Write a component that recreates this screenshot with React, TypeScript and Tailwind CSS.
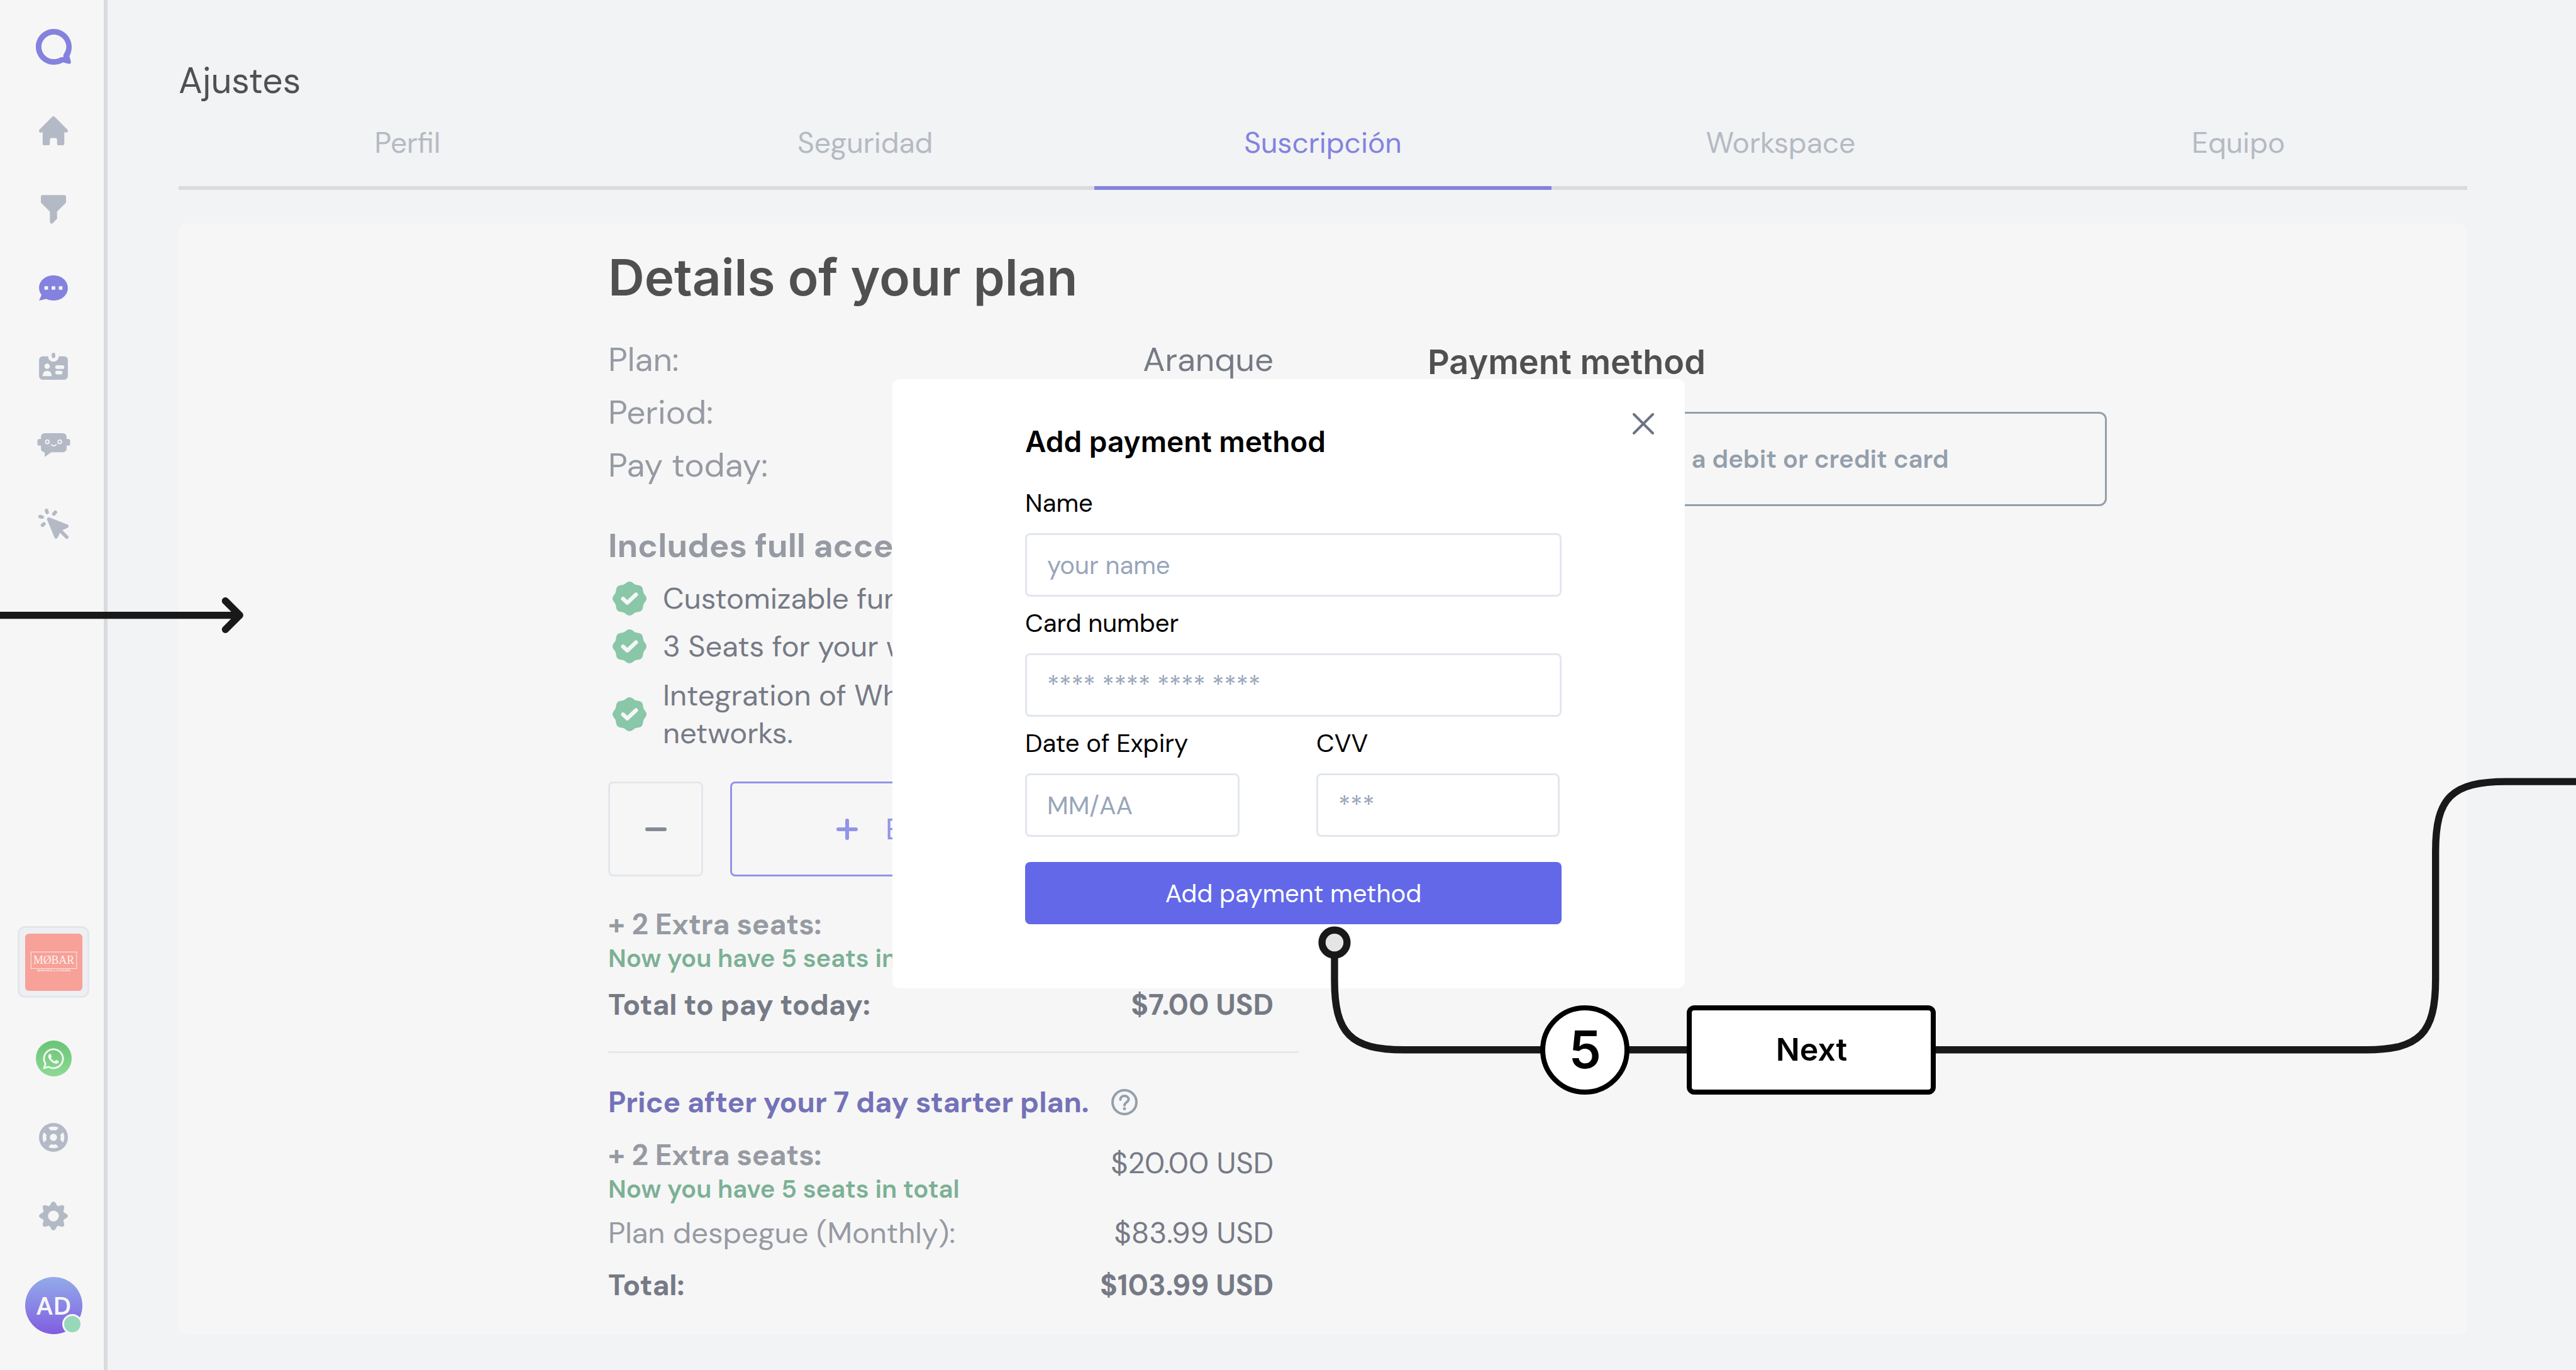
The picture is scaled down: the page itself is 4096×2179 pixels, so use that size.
import React from "react";
import { FaWhatsapp } from "react-icons/fa";
import { CreditCard } from "lucide-react";

const SANS = "font-['DM_Sans','Inter',sans-serif]";

function LogoIcon() {
  return (
    <svg viewBox="0 0 80 80" className="h-[57px] w-[57px] text-[#8482de]" aria-hidden="true">
      <path
        fill="currentColor"
        fillRule="evenodd"
        d="M40 0C62 0 80 18 80 40c0 8-2 15-5 21l3 11c1.200 4-1 7-5 6l-12.500-3.200C54.500 78.500 47 80 40 80 18 80 0 62 0 40S18 0 40 0Zm0 12.500C25 12.500 12.500 25 12.500 40S25 67.500 40 67.500c6.500 0 10.500-1.500 15-4 2-1 4.500-1 6.800-.5-.8-2.500-.6-5 .6-7C65.500 51 68 46.500 68 40 68 25 55 12.500 40 12.500Z"
      />
    </svg>
  );
}

function HomeIcon() {
  return (
    <svg viewBox="0 0 64 64" className="h-[46px] w-[46px]" fill="currentColor" aria-hidden="true">
      <path d="M29.300 1.100 1.300 29.200a4 4 0 0 0 5.400 5.900L8 34v26a4 4 0 0 0 4 4h8a4 4 0 0 0 4-4v-8a4 4 0 0 1 4-4h8a4 4 0 0 1 4 4v8a4 4 0 0 0 4 4h8a4 4 0 0 0 4-4V34l1.300 1.100a4 4 0 0 0 5.400-5.900L34.700 1.100a4 4 0 0 0-5.400 0Z" />
    </svg>
  );
}

function FunnelIcon() {
  return (
    <svg viewBox="0 0 56 64" className="h-[46px] w-10" fill="currentColor" aria-hidden="true">
      <path d="M4 0h48a4 4 0 0 1 4 4v13L36 37v16l-9.200 9.500A4 4 0 0 1 20 60V37L0 17V4a4 4 0 0 1 4-4Z" />
    </svg>
  );
}

function ChatIcon() {
  return (
    <svg viewBox="0 0 64 56" className="h-10 w-[46px] text-[#8482de]" fill="currentColor" aria-hidden="true">
      <path
        fillRule="evenodd"
        d="M32 0c18 0 32 12 32 28S50 56 32 56c-6 0-11.500-1.200-16-3.500L0 56l5.500-12.500C2 39 0 34 0 28 0 12 14 0 32 0ZM12 24v8h8v-8Zm16 0v8h8v-8Zm16 0v8h8v-8Z"
      />
    </svg>
  );
}

function ContactsIcon() {
  return (
    <svg viewBox="0 0 64 60" className="h-[43px] w-[46px]" fill="currentColor" aria-hidden="true">
      <rect x="28" y="0" width="8" height="12" rx="4" />
      <path
        fillRule="evenodd"
        d="M8 8h12a12 12 0 0 0 24 0h12a8 8 0 0 1 8 8v36a8 8 0 0 1-8 8H8a8 8 0 0 1-8-8V16a8 8 0 0 1 8-8Zm10 16a6 6 0 1 0 0 12 6 6 0 0 0 0-12ZM8 52h20v-2a10 10 0 0 0-20 0Zm32-24a4 4 0 0 0 0 8h12a4 4 0 0 0 0-8Zm0 12a4 4 0 0 0 0 8h8a4 4 0 0 0 0-8Z"
      />
    </svg>
  );
}

function BotIcon() {
  return (
    <svg viewBox="0 0 74 54" className="h-[38px] w-[53px]" fill="currentColor" aria-hidden="true">
      <rect x="0" y="13" width="16" height="15" rx="4" />
      <rect x="58" y="13" width="16" height="15" rx="4" />
      <path d="M16 0h42a8 8 0 0 1 8 8v27a8 8 0 0 1-8 8H31.500L16.500 53.500V43H16a8 8 0 0 1-8-8V8a8 8 0 0 1 8-8Z" />
      <g fill="none" stroke="#f6f6f6" strokeWidth="2.600" strokeLinecap="round">
        <circle cx="22.500" cy="19.500" r="4" />
        <circle cx="50.500" cy="19.500" r="4" />
        <path d="M31.500 26.200c3.500 3.200 7.500 3.200 11 0" />
      </g>
    </svg>
  );
}

function CursorIcon() {
  return (
    <svg
      viewBox="0 0 68 68"
      className="h-12 w-12"
      fill="none"
      stroke="currentColor"
      strokeWidth="8"
      strokeLinecap="round"
      strokeLinejoin="round"
      aria-hidden="true"
    >
      <path d="M18.300 4l1.400 4.500M38.400 8.200l-3.600 3.800M4 17.800l4.600 1.200M12.500 34.400l-3.200 3M50.500 50.500 64 64" />
      <path d="M23.500 23.500 64 39.500 47.500 47.500 40 63.500Z" fill="currentColor" />
    </svg>
  );
}

function LifebuoyIcon() {
  return (
    <svg viewBox="0 0 64 64" className="h-[46px] w-[46px]" fill="none" stroke="currentColor" aria-hidden="true">
      <circle cx="32" cy="32" r="28" strokeWidth="8" />
      <circle cx="32" cy="32" r="12" strokeWidth="8" />
      <path strokeWidth="14" d="m23 23-8-8m26 8 8-8m-26 26-8 8m26-8 8 8" />
    </svg>
  );
}

function wavyCircle(cx: number, cy: number, radius: number, wave: number, bumps: number) {
  const points: string[] = [];
  for (let deg = 0; deg < 360; deg += 3) {
    const a = (deg * Math.PI) / 180;
    const r = radius + wave * Math.cos(bumps * a);
    points.push(`${(cx + r * Math.cos(a)).toFixed(2)} ${(cy + r * Math.sin(a)).toFixed(2)}`);
  }
  return `M${points.join("L")}Z`;
}

function GearIcon() {
  return (
    <svg viewBox="0 0 64 64" className="h-[46px] w-[46px]" fill="currentColor" aria-hidden="true">
      <path fillRule="evenodd" d={`${wavyCircle(32, 32, 28, 4, 8)}M44 32a12 12 0 1 0-24 0 12 12 0 0 0 24 0Z`} />
    </svg>
  );
}

function BadgeIcon() {
  return (
    <svg viewBox="0 0 76 76" className="h-[54px] w-[54px] shrink-0" aria-hidden="true">
      <path fill="#89c7a8" d={wavyCircle(38, 38, 36, 2, 8)} />
      <path
        d="M23.500 38.500 33 47.500 52.500 29"
        fill="none"
        stroke="#f6f6f6"
        strokeWidth="9"
        strokeLinecap="round"
        strokeLinejoin="round"
      />
    </svg>
  );
}

function BrandMark() {
  return (
    <svg viewBox="0 0 128 128" className="h-[91px] w-[91px] rounded-md bg-[#f7a198]" role="img" aria-label="Møbar">
      <rect x="13" y="41" width="102" height="37" fill="none" stroke="#fbe9e6" strokeWidth="1.500" />
      <text x="64" y="68" textAnchor="middle" fill="#fdf3f1" fontSize="25" fontFamily="'Liberation Serif', serif">
        MØBAR
      </text>
      <text x="64" y="84" textAnchor="middle" fill="#fbe9e6" fontSize="5" fontWeight="700" fontFamily="'Liberation Sans', sans-serif">
        BARRA MÓVIL &amp; COCTELERÍA
      </text>
    </svg>
  );
}

const NAV = [
  { label: "Inicio", icon: <HomeIcon /> },
  { label: "Embudos", icon: <FunnelIcon /> },
  { label: "Chats", icon: <ChatIcon /> },
  { label: "Contactos", icon: <ContactsIcon /> },
  { label: "Bots", icon: <BotIcon /> },
  { label: "Acciones", icon: <CursorIcon /> },
];

const TOOLS = [
  {
    label: "WhatsApp",
    icon: (
      <span className="flex h-[57px] w-[57px] items-center justify-center rounded-full bg-linear-to-b from-[#6ac476] to-[#8dda94]">
        <FaWhatsapp className="h-[38px] w-[38px] text-[#f6f6f6]" />
      </span>
    ),
  },
  { label: "Ayuda", icon: <LifebuoyIcon /> },
  { label: "Configuración", icon: <GearIcon /> },
];

function NavItem({ label, icon }: { label: string; icon: React.ReactNode }) {
  return (
    <a href="#" aria-label={label} className="flex h-[125px] items-center justify-center text-[#b3bac6]">
      {icon}
    </a>
  );
}

function Sidebar() {
  return (
    <nav className="flex w-[171px] shrink-0 flex-col items-center border-r-[6px] border-[#dadbdf] bg-[#f6f6f6] pt-3 pb-[57px] pl-[5px]">
      <a href="#" aria-label="Logo" className="mb-2 flex h-[125px] items-center">
        <LogoIcon />
      </a>
      {NAV.map((item) => (
        <NavItem key={item.label} {...item} />
      ))}
      <div className="mt-auto flex flex-col items-center">
        <div className="mb-[34px] flex h-[114px] w-[114px] items-center justify-center rounded-xl border-[3px] border-[#e3e7eb] bg-[#edeff3]">
          <BrandMark />
        </div>
        {TOOLS.map((item) => (
          <NavItem key={item.label} {...item} />
        ))}
        <div className="relative mt-[35px] flex h-[91px] w-[91px] items-center justify-center rounded-full bg-linear-to-b from-[#93abe9] to-[#805ce0] text-[40px] font-semibold text-[#f6f6f6]">
          AD
          <span className="absolute right-0 bottom-0 h-8 w-8 rounded-full border-[3px] border-[#f6f6f6] bg-[#97d8b8]" />
        </div>
      </div>
    </nav>
  );
}

const TABS = ["Perfil", "Seguridad", "Suscripción", "Workspace", "Equipo"];

function Tabs() {
  return (
    <div role="tablist" className="mt-[38px] grid grid-cols-5 text-[46px] leading-[60px]">
      {TABS.map((tab) =>
        tab === "Suscripción" ? (
          <button key={tab} role="tab" aria-selected="true" className="border-b-[6px] border-[#8482de] pb-[39px] text-[#8482de]">
            {tab}
          </button>
        ) : (
          <button key={tab} role="tab" aria-selected="false" className="border-b-[6px] border-[#dadbdf] pb-[39px] text-[#b5bac2]">
            {tab}
          </button>
        ),
      )}
    </div>
  );
}

function PlanDetails() {
  return (
    <section className="col-start-2 text-[47px] leading-[60px] text-[#969aa3]">
      <h2 className="font-['Inter',sans-serif] text-[80px] leading-24 font-semibold text-[#505050]">Details of your plan</h2>
      <div className="mt-[41px] text-[53px] leading-[84px]">
        <div className="flex justify-between pr-10">
          <span>Plan:</span>
          <span className="text-[#767a86]">Aranque</span>
        </div>
        <div>Period:</div>
        <div>Pay today:</div>
      </div>
      <h3 className="mt-11 text-[53px] leading-[84px] font-bold">Includes full access to:</h3>
      <ul className="mt-3 flex flex-col text-[#767a86]">
        <li className="flex items-center gap-[26px] pl-[7px]">
          <BadgeIcon />
          <span>Customizable funnels</span>
        </li>
        <li className="mt-4 flex items-center gap-[26px] pl-[7px]">
          <BadgeIcon />
          <span>3 Seats for your workspace</span>
        </li>
        <li className="mt-[18px] flex items-center gap-[26px] pl-[7px]">
          <BadgeIcon />
          <span>
            Integration of WhatsApp and social
            <br />
            networks.
          </span>
        </li>
      </ul>
      <div className="mt-[47px] flex gap-[43px] pr-10">
        <button
          aria-label="Remove seat"
          className="flex h-[151px] w-[151px] shrink-0 items-center justify-center rounded-lg border-[3px] border-[#e3e7eb] text-[#868a96]"
        >
          <span className="h-[6px] w-[34px] rounded-full bg-current" />
        </button>
        <button className="flex h-[151px] flex-1 items-center gap-11 rounded-lg border-[3px] border-[#9294e9] pl-[166px] text-[#9294e9]">
          <svg viewBox="0 0 34 34" className="h-[34px] w-[34px]" aria-hidden="true">
            <path d="M17 3v28M3 17h28" fill="none" stroke="currentColor" strokeWidth="6" strokeLinecap="round" />
          </svg>
          <span>Extra seats</span>
        </button>
      </div>
      <div className="mt-[46px] text-[46px] font-bold">+ 2 Extra seats:</div>
      <div className="text-[40px] leading-12 font-semibold text-[#7cb095]">Now you have 5 seats in total</div>
      <div className="mt-5 flex justify-between pr-10 text-[46px] font-bold text-[#767a86]">
        <span>Total to pay today:</span>
        <span>$7.00 USD</span>
      </div>
      <hr className="mt-11 border-t-[3px] border-[#e4e8ec]" />
      <div className="mt-12 flex items-center gap-9">
        <h3 className="text-[46px] font-bold text-[#7472b8]">Price after your 7 day starter plan.</h3>
        <button aria-label="Help" className="text-[#949fac]">
          <svg viewBox="0 0 42 42" className="h-[42px] w-[42px]" fill="none" stroke="currentColor" strokeLinecap="round" aria-hidden="true">
            <circle cx="21" cy="21" r="19" strokeWidth="4" />
            <path d="M14.500 17c0-4 3-6 6.500-6s6.500 2.200 6.500 5.700c0 4.300-6.500 4.800-6.500 9.300" strokeWidth="4" />
            <circle cx="21" cy="31.500" r="2.400" fill="currentColor" stroke="none" />
          </svg>
        </button>
      </div>
      <div className="mt-6 flex items-start justify-between pr-10">
        <div>
          <div className="text-[46px] font-bold">+ 2 Extra seats:</div>
          <div className="text-[40px] leading-12 font-semibold text-[#7cb095]">Now you have 5 seats in total</div>
        </div>
        <span className="pt-[13px] text-[#767a86]">$20.00 USD</span>
      </div>
      <div className="mt-4 flex justify-between pr-10">
        <span>Plan despegue (Monthly):</span>
        <span className="text-[#767a86]">$83.99 USD</span>
      </div>
      <div className="mt-[23px] flex justify-between pr-10 text-[46px] font-bold text-[#767a86]">
        <span>Total:</span>
        <span>$103.99 USD</span>
      </div>
    </section>
  );
}

function PaymentMethod() {
  return (
    <section className="col-start-4 pt-[151px]">
      <h2 className="-ml-1 font-['Inter',sans-serif] text-[54px] leading-16 font-semibold text-[#505050]">Payment method</h2>
      <button className="mt-[47px] flex h-[150px] w-full items-center justify-center gap-7 rounded-xl border-[3px] border-[#949fac] text-[40px] font-semibold text-[#949fac]">
        <CreditCard size={48} />
        <span>Add a debit or credit card</span>
      </button>
    </section>
  );
}

function Field({ id, label, placeholder }: { id: string; label: string; placeholder: string }) {
  return (
    <div className="flex flex-col gap-[18px] text-[40px]">
      <label htmlFor={id} className="leading-[60px] text-black">
        {label}
      </label>
      <input
        id={id}
        placeholder={placeholder}
        className="h-[101px] w-full rounded-lg border-[3px] border-[#e2e7ee] bg-white px-8 placeholder:text-[#98a5b9]"
      />
    </div>
  );
}

function PaymentDialog() {
  return (
    <div className="absolute inset-0 flex items-center justify-center pb-1 pl-[2px]">
      <div role="dialog" aria-labelledby="dialog-title" className="relative w-[1260px] rounded-xl bg-white pt-[69px] pr-[196px] pb-[102px] pl-[211px]">
        <button aria-label="Close" className="absolute top-[54px] right-[49px] text-[#6b7283]">
          <svg viewBox="0 0 34 34" className="h-[34px] w-[34px]" aria-hidden="true">
            <path d="m2 2 30 30M32 2 2 32" stroke="currentColor" strokeWidth="4" strokeLinecap="round" />
          </svg>
        </button>
        <h2 id="dialog-title" className="font-['Inter',sans-serif] text-[46px] leading-[60px] font-semibold text-black">
          Add payment method
        </h2>
        <form className="mt-[38px] flex flex-col gap-3">
          <Field id="name" label="Name" placeholder="your name" />
          <Field id="card" label="Card number" placeholder="**** **** **** ****" />
          <div className="grid grid-cols-[341fr_122fr_387fr_3fr]">
            <Field id="expiry" label="Date of Expiry" placeholder="MM/AA" />
            <div className="col-start-3">
              <Field id="cvv" label="CVV" placeholder="***" />
            </div>
          </div>
          <button type="button" className="mt-7 h-[99px] rounded-lg bg-[#6268e8] text-[40px] text-white">
            Add payment method
          </button>
        </form>
      </div>
    </div>
  );
}

function FlowOverlay() {
  return (
    <div className="pointer-events-none absolute inset-0">
      <svg viewBox="0 0 5760 3064" className="h-full w-full" fill="none" stroke="#191919" strokeWidth="16" aria-hidden="true">
        <path d="M0 1376H536M504 1344l32 32-32 32" strokeLinecap="round" strokeLinejoin="round" />
        <path d="M2984 2108V2192C2984 2312 3020 2348 3140 2348H5290C5410 2348 5446 2312 5446 2190V1904C5446 1784 5482 1748 5604 1748H5760" />
        <circle cx="2984" cy="2108" r="28" fill="#e5e5e5" />
      </svg>
      <div className="absolute top-[73.36%] left-[59.8%] flex items-center gap-[91px] font-['Inter',sans-serif] font-semibold text-black">
        <div className="flex h-[142px] w-[142px] items-center justify-center rounded-full border-[8px] border-black bg-white text-[82px]">5</div>
        <div className="flex h-[142px] w-[396px] items-center justify-center rounded-xl border-[8px] border-black bg-white text-[50px]">Next</div>
      </div>
    </div>
  );
}

export default function App() {
  return (
    <div className={`relative flex min-h-screen overflow-hidden bg-[#f1f3f5] ${SANS}`}>
      <Sidebar />
      <main className="flex min-w-0 flex-1 flex-col pt-[99px] pr-[173px] pb-[57px] pl-[113px]">
        <h1 className="text-[57px] leading-[60px] text-[#505050]">Ajustes</h1>
        <Tabs />
        <div className="mt-[54px] grid grow grid-cols-[683fr_1098fr_209fr_1076fr_573fr] items-start rounded-xl bg-[#f6f6f6] pt-[37px] pb-11">
          <PlanDetails />
          <PaymentMethod />
        </div>
      </main>
      <PaymentDialog />
      <FlowOverlay />
    </div>
  );
}
